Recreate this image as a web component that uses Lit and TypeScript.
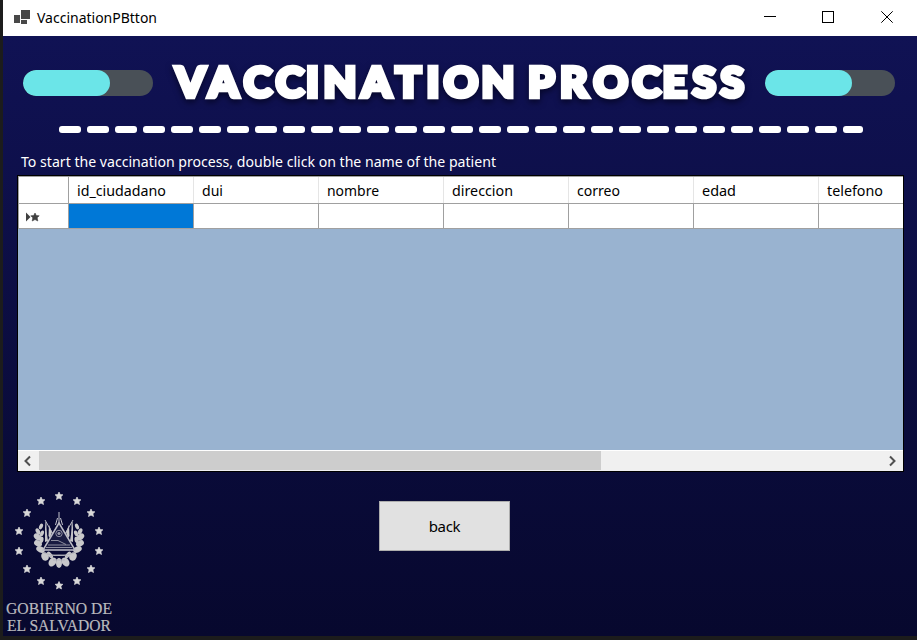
import { LitElement, html, svg, css } from "lit";
import { customElement } from "lit/decorators.js";

const COLUMNS: [string, number][] = [
  ["id_ciudadano", 89], ["dui", 21], ["nombre", 52], ["direccion", 61],
  ["correo", 43], ["edad", 34], ["telefono", 56],
];

@customElement("vp-titlebar")
class Titlebar extends LitElement {
  static styles = css`
    :host { display: flex; align-items: center; height: 36px; background: #fff; color: #000; box-sizing: border-box; padding-left: 11px; }
    svg { display: block; flex: none; }
    .name { flex: 1; }
  `;
  render() {
    return html`
      <svg width="16" height="16" viewBox="0 0 16 16" shape-rendering="crispEdges">
        <path fill="#484848" d="M7 0h9v9H7zM0 5h6v8H0zM7 10h6v4H7z"/>
      </svg>
      <svg class="name" height="36">
        <text x="7" y="23" font-size="15" textLength="120" lengthAdjust="spacingAndGlyphs" fill="#000">VaccinationPBtton</text>
      </svg>
      <svg width="156" height="36" viewBox="0 0 156 36" fill="none" stroke="#000" stroke-width="1">
        <path d="M3 16.500h12M61.500 11.500h11v11h-11z" shape-rendering="crispEdges"/>
        <path d="M120.300 11.300l11.400 11.400M131.700 11.300l-11.400 11.400"/>
      </svg>`;
  }
}

@customElement("vp-pill")
class Pill extends LitElement {
  static styles = css`
    :host { display: block; width: 130px; height: 26px; border-radius: 13px; background: #495057; overflow: hidden; }
    .fill { width: 87px; height: 26px; border-radius: 13px; background: #6be5e8; }
  `;
  render() {
    return html`<div class="fill"></div>`;
  }
}

@customElement("vp-banner")
class Banner extends LitElement {
  static styles = css`
    :host { display: block; height: 114px; }
    .row { display: flex; align-items: center; padding: 20px 0 0 20px; height: 54px; }
    .title { width: 612px; height: 54px; display: block; flex: none; overflow: visible; filter: drop-shadow(0 3px 3px rgba(0, 0, 20, .65)); }
    .title text { font: 900 42.500px Lato, "Liberation Sans", sans-serif; fill: #fff; stroke: #fff; stroke-width: 4.600px; stroke-linejoin: miter; stroke-miterlimit: 3; }
    .dashes { display: flex; gap: 6px; padding: 16px 0 0 56px; }
    .dashes i { flex: none; width: 22px; height: 7px; border-radius: 3px; background: #fff; }
    .dashes i:last-child { width: 20px; }
  `;
  render() {
    return html`
      <div class="row">
        <vp-pill></vp-pill>
        <svg class="title" viewBox="153 56 612 54">
          <text y="96.500" x="175.500 208.500 243.700 275.800 306 323.500 361.500 395.500 426.500 443.800 481.500">VACCINATION</text>
          <text y="96.500" x="528 560 593.500 632.500 662.500 692.500 720.500">PROCESS</text>
        </svg>
        <vp-pill></vp-pill>
      </div>
      <div class="dashes">${Array.from({ length: 29 }, () => html`<i></i>`)}</div>`;
  }
}

@customElement("vp-grid")
class Grid extends LitElement {
  static styles = css`
    :host { display: flex; flex-direction: column; box-sizing: border-box; width: 887px; height: 297px; border: 1px solid #000; background: #99b3d0; overflow: hidden; }
    .tr { display: grid; grid-template-columns: 50px repeat(7, 125px); width: 926px; box-sizing: border-box; background: #fff; border-left: 1px solid #a0a0a0; }
    .head { height: 28px; border-top: 1px solid #a0a0a0; border-bottom: 1px solid #a0a0a0; }
    .head > div { box-sizing: border-box; border-right: 1px solid #e5e5e5; }
    .head > div:first-child { border-right-color: #a0a0a0; }
    .body { height: 25px; border-bottom: 1px solid #a0a0a0; }
    .body > div { border-right: 1px solid #a0a0a0; }
    .body .selected { background: #0078d7; }
    .fillspace { flex: 1; }
    .bar { display: flex; height: 20px; background: #f0f0f0; border-top: 1px solid #fff; }
    .thumb { width: 562px; height: 19px; background: #cdcdcd; }
    .rest { flex: 1; }
    svg { display: block; flex: none; }
  `;
  render() {
    return html`
      <div class="tr head"><div></div>${COLUMNS.map(([name, width]) => html`<div>
        <svg width="120" height="25"><text x="8" y="19" font-size="15" textLength=${width} lengthAdjust="spacingAndGlyphs">${name}</text></svg></div>`)}</div>
      <div class="tr body">
        <div><svg width="49" height="24" viewBox="0 0 49 24" fill="#404040">
          <path d="M7 8.500l4.500 4.500-4.500 4.500z"/>
          <path d="M16 9l1.300 2.600 2.900.2-2 2 .6 3.200-2.800-1.500-2.800 1.500.6-3.200-2-2 2.900-.2z" stroke="#404040" stroke-width=".6"/>
        </svg></div>
        <div class="selected"></div>${COLUMNS.slice(1).map(() => html`<div></div>`)}
      </div>
      <div class="fillspace"></div>
      <div class="bar">
        <svg width="21" height="20" fill="none" stroke="#505050" stroke-width="2"><path d="M12 5.500L7.500 10l4.500 4.500"/></svg>
        <div class="thumb"></div><div class="rest"></div>
        <svg width="20" height="20" fill="none" stroke="#505050" stroke-width="2"><path d="M7 5.500l4.500 4.500L7 14.500"/></svg>
      </div>`;
  }
}

const STARS: [number, number][] = [
  [59, 16], [77, 21], [91, 33], [99, 51], [99, 71], [91, 89], [77, 101],
  [59, 105.500], [41, 101], [27, 89], [19, 71], [19, 51], [27, 33], [41, 21],
];

@customElement("vp-emblem")
class Emblem extends LitElement {
  static styles = css`
    :host { display: block; width: 120px; height: 156px; }
    svg { display: block; overflow: visible; }
    .caption { font-family: "Liberation Serif", serif; font-size: 17.500px; line-height: 1; fill: #b9b9be; stroke: #b9b9be; stroke-width: .2px; }
  `;
  render() {
    const leaf = (x: number, y: number, a: number, rx = 2.900, ry = 4.200) =>
      svg`<ellipse cx=${x} cy=${y} rx=${rx} ry=${ry} transform="rotate(${a} ${x} ${y})"/>`;
    const half = svg`
      ${leaf(41, 46.500, 25, 1.800, 3)}${leaf(38, 51.500, -30, 2, 3.500)}${leaf(42, 53.500, 20, 1.800, 3.200)}
      ${leaf(37.500, 57, -50)}${leaf(41.500, 60, 10, 2, 3.200)}${leaf(38, 63.500, -60)}
      ${leaf(40.500, 69.500, -65, 3, 4.500)}${leaf(45, 76.500, -20, 3.600, 4.300)}${leaf(52.500, 82, 35, 3.600, 4.800)}
      ${leaf(50, 75, -40, 2, 4)}
      <path d="M45 41l3 20-3 1zM49 45l3 7-2 6-1.500-2z"/>
      <path d="M45 40l8 14M46 42v18" fill="none" stroke="#b9b9c3" stroke-width="1"/>`;
    return html`
      <svg width="120" height="156" viewBox="0 0 120 156">
        <g fill="#d8d8d8" stroke="#d8d8d8" stroke-width=".7">
          ${STARS.map(([x, y]) => svg`<path transform="translate(${x} ${y})" d="M0-4L1.200-1.400 3.900-1.200 1.900.7 2.500 3.500 0 2.100-2.500 3.500-1.900.7-3.900-1.200-1.200-1.400z"/>`)}
        </g>
        <g fill="#c8c8ca">
          ${half}<g transform="matrix(-1 0 0 1 118 0)">${half}</g>
          <ellipse cx="59" cy="83" rx="3" ry="5"/>
        </g>
        <path d="M59 43L43 70h32z" fill="#191b42" stroke="#bdbdc7" stroke-width="1.500"/>
        <g fill="none" stroke="#8e8ea0" stroke-width="1">
          <path d="M59 32v11M57.500 38l-2 7M60.500 38l2 7" stroke="#c5c5cd"/>
          <circle cx="59" cy="53.500" r="3.200"/><circle cx="59" cy="53.500" r="1.200" fill="#a1a1b0"/>
          <path d="M51 60.500h7l8 4M48 65h22M46 67.500h26"/>
          <path d="M44 73q15 5 30 0M48 77q11-4 22 0M53 80h12" stroke="#b5b5bd"/>
        </g>
        <text class="caption" x="6" y="133.500" textLength="106" lengthAdjust="spacingAndGlyphs">GOBIERNO DE</text>
        <text class="caption" x="7" y="150.500" textLength="104" lengthAdjust="spacingAndGlyphs">EL SALVADOR</text>
      </svg>`;
  }
}

@customElement("app-root")
class AppRoot extends LitElement {
  static styles = css`
    :host { display: block; box-sizing: border-box; width: 917px; height: 640px; padding-left: 3px; background: #1c1c1c; overflow: hidden; font: 15px/20px "Noto Sans", "Open Sans", sans-serif; }
    .form { height: 600px; background: linear-gradient(#101254, #07082e); }
    .hint { display: block; height: 25px; fill: #fff; }
    vp-grid { margin-left: 14px; }
    .footer { display: flex; height: 164px; }
    vp-emblem { margin: 8px 0 0 -3px; width: 379px; }
    button { font: inherit; width: 131px; height: 50px; margin-top: 29px; border: 1px solid #adadad; background: #e1e1e1; color: #000; padding: 0; letter-spacing: -.3px; }
  `;
  render() {
    return html`
      <vp-titlebar></vp-titlebar>
      <div class="form">
        <vp-banner></vp-banner>
        <svg class="hint" width="600" height="25"><text x="18" y="17" font-size="15" textLength="475" lengthAdjust="spacingAndGlyphs">To start the vaccination process, double click on the name of the patient</text></svg>
        <vp-grid></vp-grid>
        <div class="footer">
          <vp-emblem></vp-emblem>
          <button>back</button>
        </div>
      </div>`;
  }
}
